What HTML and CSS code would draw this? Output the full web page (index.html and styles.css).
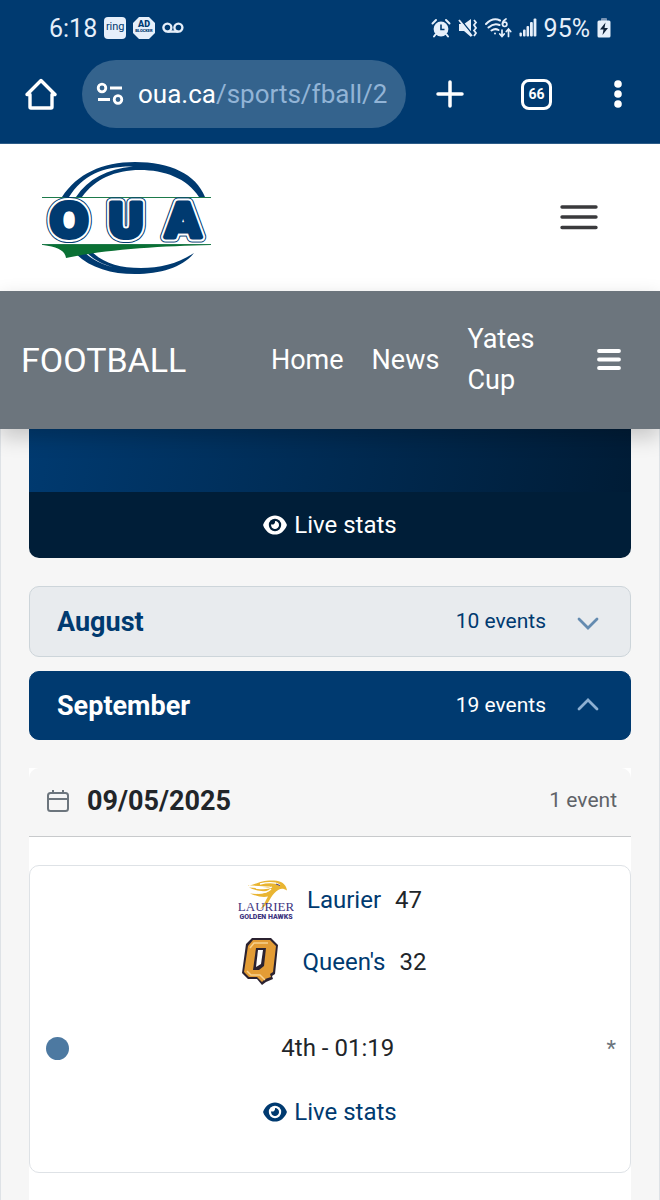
FILE: index.html
```html
<!DOCTYPE html>
<html lang="en">

<head>
  <meta charset="UTF-8" />
  <meta name="viewport" content="width=device-width, initial-scale=1.0" />
  <title>Football - OUA</title>
  <link rel="stylesheet" href="styles.css">
</head>

<body>
  <!-- Phone status bar and browser toolbar -->
  <div class="browser">
    <div class="status-bar">
      <div class="status-left">
        <span class="clock">6:18</span>
        <span class="app-icon">ring</span>
        <svg class="adblock" width="22" height="22" viewBox="0 0 22 22">
          <path d="M6 0h10l6 6v10l-6 6H6l-6-6V6z" fill="#e6effa" />
          <text x="11" y="10" class="ad-big">AD</text>
          <text x="11" y="15" class="ad-small">BLOCKER</text>
        </svg>
        <svg width="22" height="12" viewBox="0 0 22 12" fill="none" stroke="#e6effa" stroke-width="2.4">
          <circle cx="5.4" cy="5.6" r="4" />
          <circle cx="16.4" cy="5.6" r="4" />
          <path d="M5.4 9.6h11" />
        </svg>
      </div>
      <div class="status-right">
        <svg width="20" height="20" viewBox="0 0 20 20">
          <circle cx="10" cy="11" r="7.4" fill="#e6effa" />
          <path d="M1.5 5.5L5 2M18.5 5.5L15 2M4.5 16.5L3 18.5M15.5 16.5L17 18.5" stroke="#e6effa" stroke-width="2" stroke-linecap="round" />
          <path d="M10 6.5V11.5H13.5" fill="none" stroke="#003a70" stroke-width="1.6" />
        </svg>
        <svg width="20" height="20" viewBox="0 0 20 20">
          <path d="M1 6h5l7-5v18l-7-6H1z" fill="#e6effa" />
          <path d="M2 1L15 17" stroke="#003a70" stroke-width="1.6" />
          <path d="M1 2L14 18" stroke="#e6effa" stroke-width="1.8" />
          <path d="M16 2l2 2.5-2 2.5 2 3-2 2.5 2 2.5-2 3" fill="none" stroke="#e6effa" stroke-width="1.8" />
        </svg>
        <svg width="27" height="20" viewBox="0 0 27 20" fill="none" stroke="#e6effa" stroke-width="2" stroke-linecap="round">
          <path d="M1 6Q8 -1 15 2.5M3.5 9.5Q9 4.5 14.5 7M6.5 12.5Q10 10 13.5 12" />
          <circle cx="10" cy="15.5" r="1" fill="#e6effa" stroke="none" />
          <path d="M21 1Q17.5 3 17.5 6" stroke-width="1.7" />
          <circle cx="19.7" cy="6.3" r="2.2" stroke-width="1.7" />
          <path d="M17 12v6M14.8 16l2.2 2.5 2.2-2.5M23.5 18.5v-7M21.3 13.5l2.2-2.5 2.2 2.5" stroke-width="1.7" />
        </svg>
        <svg width="18" height="20" viewBox="0 0 18 20" fill="#e6effa">
          <rect x="0.5" y="14.5" width="2.4" height="4" rx="1" />
          <rect x="4" y="11.5" width="2.6" height="7" rx="1" />
          <rect x="7.5" y="8" width="2.6" height="10.5" rx="1" />
          <rect x="11" y="4" width="2.8" height="14.5" rx="1" />
          <rect x="14.6" y="0.5" width="2.8" height="18" rx="1" />
        </svg>
        <span class="clock">95%</span>
        <svg width="14" height="20" viewBox="0 0 14 20">
          <rect x="4" y="0" width="6" height="4" rx="1" fill="#7893b4" />
          <rect x="0.5" y="2.5" width="13" height="17" rx="1.5" fill="#e6effa" />
          <path d="M8.5 4.5L3 11.5h3.5L5.5 17 11 10H7.5z" fill="#10233a" />
        </svg>
      </div>
    </div>

    <div class="toolbar">
      <button class="tool home" aria-label="Home page">
        <svg width="32" height="32" viewBox="0 0 32 32" fill="none" stroke="#fff" stroke-width="3.4" stroke-linejoin="round" stroke-linecap="round">
          <path d="M2 16.5L16 2.5 30 16.5H27V29a1 1 0 0 1-1 1H6a1 1 0 0 1-1-1V16.5z" />
        </svg>
      </button>
      <a class="address" href="#">
        <svg width="28" height="24" viewBox="0 0 28 24" fill="none" stroke="#fff" stroke-width="2.8">
          <circle cx="6" cy="6" r="3.8" />
          <path d="M14 6h12M2 17.5h12" />
          <circle cx="22" cy="17.5" r="3.8" />
        </svg>
        <span class="url">oua.ca<span class="path">/sports/fball/2</span></span>
      </a>
      <button class="tool plus" aria-label="New tab">
        <svg width="28" height="28" viewBox="0 0 28 28" stroke="#fff" stroke-width="3.5" stroke-linecap="round">
          <path d="M14 2v24M2 14h24" />
        </svg>
      </button>
      <button class="tool tabs" aria-label="Open tabs">66</button>
      <button class="tool more" aria-label="More options">
        <svg width="8" height="28" viewBox="0 0 8 28" fill="#fff">
          <circle cx="4" cy="4" r="3.8" />
          <circle cx="4" cy="14" r="3.8" />
          <circle cx="4" cy="24" r="3.8" />
        </svg>
      </button>
    </div>
  </div>

  <!-- Site header -->
  <header class="site-header">
    <a href="#" aria-label="OUA">
      <svg class="logo" width="172" height="116" viewBox="0 0 172 116">
        <path d="M1 37.5H170M1 84.5H170" stroke="#1d7a4a" stroke-width="1" />
        <path d="M21 37C36 14 61 2 94 2c35 0 61 12 70 35h-6C146 18 123 10 99 10c-25 0-45 9-58 27h-6C47 19 66 9 92 6.5 62 6 42 15 28 37z" fill="#003a70" />
        <path d="M34 93c15 15 36 21 60 21 26 0 48-7 59-21-17 11-34 15-53 15-22 0-38-5-50-17l-5 1c8 8 16 12 27 15-13-3-21-8-29-15z" fill="#003a70" />
        <path d="M2 85H170C119 86 61 90 25 98c-1-8-9-11-23-13z" fill="#0a7034" />
        <g class="logo-outline">
          <text x="28" y="77">O</text>
          <text x="85" y="77">U</text>
          <text x="142" y="77">A</text>
        </g>
        <g class="logo-gap">
          <text x="28" y="77">O</text>
          <text x="85" y="77">U</text>
          <text x="142" y="77">A</text>
        </g>
        <ellipse cx="28" cy="60" rx="6" ry="11" fill="#fff" />
        <g class="logo-letters">
          <text x="28" y="77">O</text>
          <text x="85" y="77">U</text>
          <text x="142" y="77">A</text>
        </g>
      </svg>
    </a>
    <button class="tool" aria-label="Menu">
      <svg width="40" height="28" viewBox="0 0 40 28" stroke="#3a3a3c" stroke-width="3.4" stroke-linecap="round">
        <path d="M3 3h34M3 13h34M3 23.5h34" />
      </svg>
    </button>
  </header>

  <!-- Football sub navigation -->
  <nav class="sport-nav">
    <a class="sport" href="#">FOOTBALL</a>
    <div class="links">
      <a href="#">Home</a>
      <a href="#">News</a>
      <a class="yates" href="#">Yates Cup</a>
    </div>
    <button class="tool" aria-label="Football menu">
      <svg width="24" height="22" viewBox="0 0 24 22" stroke="#fff" stroke-width="3.8" stroke-linecap="round">
        <path d="M2 2h20M2 10.5h20M2 19h20" />
      </svg>
    </button>
  </nav>

  <main class="schedule">
    <section class="featured">
      <div class="featured-body"></div>
      <a class="live" href="#">
        <svg class="eye" width="24" height="20" viewBox="0 0 24 20">
          <path d="M12 .5C6.5 .5 2.5 4 .3 9.3q-.3.7 0 1.4C2.5 16 6.5 19.5 12 19.5s9.5-3.5 11.7-8.8q.3-.7 0-1.4C21.5 4 17.5.5 12 .5z" fill="currentColor" />
          <circle class="eye-hole" cx="12" cy="10" r="6.2" />
          <path d="M12 6a4 4 0 1 1-3.9 3.3A2.8 2.8 0 0 0 12 6z" fill="currentColor" />
        </svg>
        Live stats
      </a>
    </section>

    <button class="month">
      <span class="month-name">August</span>
      <span class="count">10 events</span>
      <svg width="24" height="16" viewBox="0 0 24 16" fill="none" stroke="#648bb0" stroke-width="2.8" stroke-linecap="round">
        <path d="M3 5l9 9 9-9" />
      </svg>
    </button>
    <button class="month open">
      <span class="month-name">September</span>
      <span class="count">19 events</span>
      <svg width="24" height="16" viewBox="0 0 24 16" fill="none" stroke="#8db0d3" stroke-width="2.8" stroke-linecap="round">
        <path d="M3 11l9-9 9 9" />
      </svg>
    </button>

    <section class="day">
      <div class="day-head">
        <svg width="22" height="24" viewBox="0 0 22 24" fill="none" stroke="#6c757d" stroke-width="2">
          <rect x="1" y="4" width="20" height="18" rx="2.5" />
          <path d="M1 10h20M6 1v3M16 1v3" />
        </svg>
        <h2>09/05/2025</h2>
        <span>1 event</span>
      </div>

      <article class="game">
        <div class="team">
          <svg width="56" height="40" viewBox="0 0 56 40">
            <path d="M10 6C20 3 25 0 36 .5c7 .5 12 3 13 10-3-2-6-2-8-1-4 2-6 5-8 8-3 6-6 9-11 12 5-6 6-10 8-13-5 1-11 0-18-3 8 1 13 0 19-2-7 0-14-1-20-4 9 1 16 1 22-1-7 0-15-1-23-1z" fill="#e9b532" />
            <path d="M22 4c8-2 15-2 20 1M18 8c7 1 12 1 16-1M20 13c6 0 10-1 13-4" stroke="#fff" stroke-width="1.3" fill="none" />
            <path d="M38 4l4 1.5" stroke="#51407b" stroke-width="1" />
            <text x="28" y="31" class="laurier-name">LAURIER</text>
            <text x="28" y="39" class="laurier-sub">GOLDEN HAWKS</text>
          </svg>
          <a href="#">Laurier</a>
          <span>47</span>
        </div>
        <div class="team">
          <svg width="56" height="48" viewBox="-4 0 56 48">
            <path d="M14 0h19l7 7-3 29-3 2 1 3-7 3-4 3-5-6h-9l-6-6 4-29z" fill="#2b2230" />
            <path d="M15 2h17l6 6-3 26-3 2 1 3-6 2-3 3-5-5h-8l-5-5 4-26z" fill="#e39c35" />
            <path d="M12 10l4-5h14M9 33l4 4h9l5 5" fill="none" stroke="#f8d18d" stroke-width="1.5" />
            <path d="M18 10h10l-2 18-5 4h-6z" fill="#2b2230" />
            <path d="M20 12h5l-2 14-5 3z" fill="#fff" />
          </svg>
          <a href="#">Queen's</a>
          <span>32</span>
        </div>
        <div class="progress">
          <span class="dot"></span>
          <span>4th - 01:19</span>
          <span class="note">*</span>
        </div>
        <a class="live" href="#">
          <svg class="eye" width="24" height="20" viewBox="0 0 24 20">
            <path d="M12 .5C6.5 .5 2.5 4 .3 9.3q-.3.7 0 1.4C2.5 16 6.5 19.5 12 19.5s9.5-3.5 11.7-8.8q.3-.7 0-1.4C21.5 4 17.5.5 12 .5z" fill="currentColor" />
            <circle class="eye-hole" cx="12" cy="10" r="6.2" />
            <path d="M12 6a4 4 0 1 1-3.9 3.3A2.8 2.8 0 0 0 12 6z" fill="currentColor" />
          </svg>
          Live stats
        </a>
      </article>
    </section>
  </main>
</body>

</html>
```
FILE: styles.css
```css
* {
  box-sizing: border-box;
}

body {
  margin: 0;
  min-height: 100vh;
  display: flex;
  flex-direction: column;
  font-family: Roboto, sans-serif;
  font-size: 24px;
  color: #212529;
  background: #f6f6f6;
}

a {
  color: #003a70;
  text-decoration: none;
}

svg {
  display: block;
  flex: none;
}

button {
  font-family: inherit;
  cursor: pointer;
}

.tool {
  display: flex;
  padding: 0;
  border: none;
  background: none;
}

/* browser chrome */
.browser {
  background: #003a70;
  color: #fff;
  height: 144px;
  border-bottom: 1px solid #2d5c88;
}

.status-bar {
  display: flex;
  justify-content: space-between;
  align-items: center;
  height: 60px;
  padding: 0 49px 4px;
  color: #e6effa;
}

.status-left,
.status-right {
  display: flex;
  align-items: center;
  gap: 7px;
}

.clock {
  font-size: 25px;
}

.app-icon {
  width: 22px;
  height: 22px;
  border-radius: 4px;
  background: #e6effa;
  color: #003a70;
  font-size: 11px;
  line-height: 20px;
  text-align: center;
}

.adblock text {
  text-anchor: middle;
  font-weight: 900;
  fill: #003a70;
}

.ad-big {
  font-size: 9px;
}

.ad-small {
  font-size: 4px;
}

.toolbar {
  display: flex;
  align-items: center;
  height: 68px;
  padding: 0 38px 0 25px;
}

.home {
  margin-right: 25px;
}

.address {
  display: flex;
  flex: 1;
  align-items: center;
  gap: 14px;
  min-width: 0;
  height: 68px;
  padding: 0 14px;
  border-radius: 34px;
  background: #34638d;
  color: #fff;
  overflow: hidden;
}

.url {
  font-size: 26px;
  white-space: nowrap;
}

.path {
  color: #92b4d6;
}

.plus {
  margin: 0 57px 0 30px;
}

.tabs {
  width: 31px;
  height: 31px;
  margin-right: 62px;
  align-items: center;
  justify-content: center;
  border: 3px solid #fff;
  border-radius: 8px;
  color: #fff;
  font-size: 14px;
  font-weight: 700;
}

/* site header */
.site-header {
  display: flex;
  justify-content: space-between;
  align-items: center;
  height: 147px;
  padding: 0 61px 0 41px;
  background: #fff;
}

.logo text {
  font-family: "DejaVu Sans", sans-serif;
  font-size: 46px;
  font-weight: 700;
  text-anchor: middle;
  stroke-linejoin: round;
}

.logo-outline {
  fill: #003a70;
  stroke: #003a70;
  stroke-width: 11;
}

.logo-gap {
  fill: #fff;
  stroke: #fff;
  stroke-width: 9;
}

.logo-letters {
  fill: #003a70;
  stroke: #003a70;
  stroke-width: 5;
}

/* sport nav */
.sport-nav {
  display: flex;
  align-items: center;
  position: relative;
  height: 138px;
  padding: 0 39px 0 21px;
  background: #6c757d;
  box-shadow: 0 8px 20px rgba(0, 0, 0, 0.2);
}

.sport-nav a {
  color: #fff;
}

.sport {
  font-size: 34px;
}

.links {
  display: flex;
  align-items: center;
  gap: 28px;
  margin: 0 auto;
  padding-left: 22px;
  font-size: 27px;
  line-height: 41px;
}

.yates {
  width: min-content;
}

/* schedule */
.schedule {
  flex: 1;
  display: flex;
  flex-direction: column;
  padding: 0 28px;
  border: solid #dee2e6;
  border-width: 0 1px;
}

.featured {
  border-radius: 0 0 10px 10px;
  overflow: hidden;
  background: #001e38;
  margin-bottom: 28px;
}

.featured-body {
  height: 63px;
  background: linear-gradient(100deg, #003a70, #001c36);
}

.live {
  display: flex;
  align-items: center;
  justify-content: center;
  gap: 7px;
  height: 66px;
}

.featured .live {
  color: #fff;
}

.eye-hole {
  fill: #fff;
}

.featured .eye-hole {
  fill: #001e38;
}

.month {
  display: flex;
  align-items: center;
  height: 71px;
  margin-bottom: 14px;
  padding: 0 30px 0 27px;
  border: 1px solid #cdd5da;
  border-radius: 10px;
  background: #e8ebee;
  color: #003a70;
}

.month.open {
  height: 69px;
  margin-bottom: 28px;
  border-color: #003a70;
  background: #003a70;
  color: #fff;
}

.month-name {
  flex: 1;
  font-size: 27px;
  font-weight: 700;
  text-align: left;
}

.count {
  margin-right: 30px;
  padding-bottom: 2px;
  font-size: 21px;
}

.day {
  flex: 1;
  background: #fff;
}

.day-head {
  display: flex;
  align-items: center;
  height: 69px;
  padding: 0 14px 2px 18px;
  border-bottom: 1px solid #c8cacc;
  border-radius: 10px 10px 0 0;
  background: #f6f6f6;
}

.day-head h2 {
  flex: 1;
  margin: 0 0 0 18px;
  font-size: 27px;
  font-weight: 700;
}

.day-head span {
  padding-bottom: 2px;
  font-size: 21px;
  color: #5f6368;
}

.game {
  height: 308px;
  margin-top: 28px;
  padding-top: 3px;
  border: 1px solid #dee2e6;
  border-radius: 10px;
}

.team {
  display: flex;
  align-items: center;
  justify-content: center;
  height: 62px;
}

.team a {
  margin: 0 14px 0 13px;
}

.laurier-name {
  font-family: "Liberation Serif", serif;
  font-size: 13px;
  text-anchor: middle;
  fill: #40357f;
}

.laurier-sub {
  font-size: 7px;
  font-weight: 900;
  text-anchor: middle;
  fill: #40357f;
}

.progress {
  display: flex;
  align-items: center;
  justify-content: space-between;
  height: 48px;
  margin: 31px 0 7px;
  padding: 0 14px 0 16px;
}

.dot {
  width: 23px;
  height: 23px;
  border-radius: 50%;
  background: #4d79a1;
}

.note {
  font-size: 22px;
  color: #6c757d;
}
```
